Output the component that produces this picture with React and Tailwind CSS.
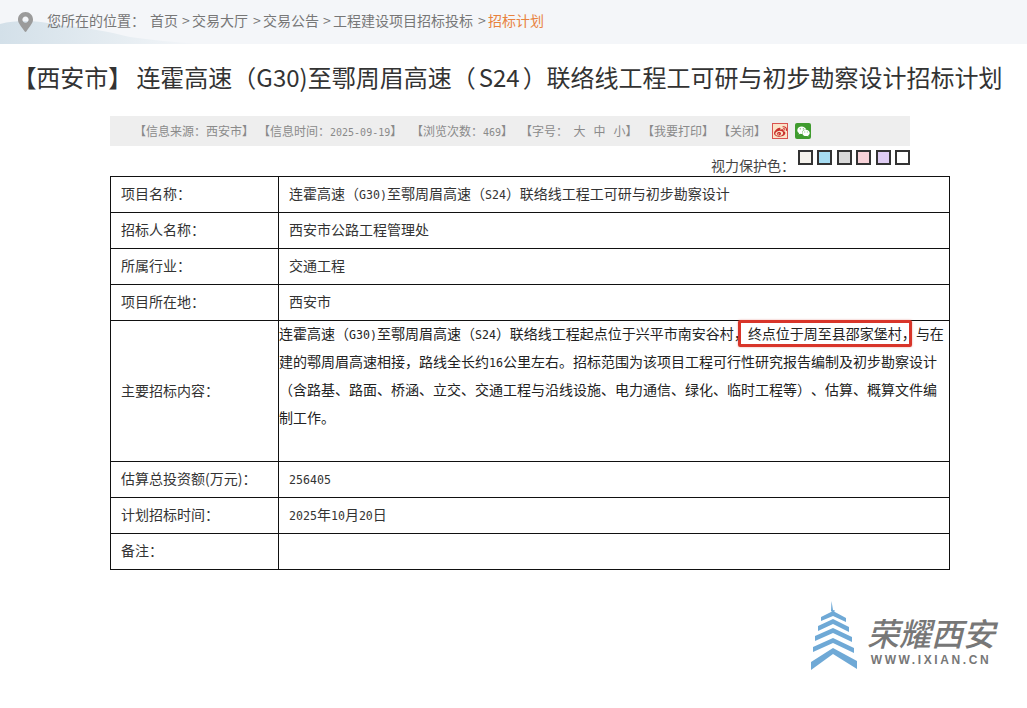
import React from "react";
import { FaMapMarkerAlt, FaWeixin } from "react-icons/fa";
import { SiSinaweibo } from "react-icons/si";

const Num = ({ children }) => (
  <span className="font-['DejaVu_Sans_Mono',monospace] text-[11.6px] leading-none">{children}</span>
);
const Small = ({ children }) => (
  <span className="font-['DejaVu_Sans_Mono',monospace] text-[10px] leading-none">{children}</span>
);

const Row = ({ label, children }) => (
  <tr className="h-9">
    <td className="border border-[#111] pb-[3px] pl-[10px] text-[#333]">{label}</td>
    <td className="border border-[#111] pb-[3px] pl-[10px] text-[#333]">{children}</td>
  </tr>
);

const swatches = [
  "bg-[#f5f2ec]",
  "bg-[#a6dcf2]",
  "bg-[#d9d9d9]",
  "bg-[#f8d3d9]",
  "bg-[#dfcdf3]",
  "bg-white",
];

export default function App() {
  return (
    <div className="w-[1027px] h-[708px] overflow-hidden bg-white font-['Noto_Sans_CJK_SC','Microsoft_YaHei',sans-serif] text-[14px] text-[#333] [text-spacing-trim:space-all]">
      {/* breadcrumb */}
      <div className="relative flex h-[44px] items-center bg-[#f4f6f9] pl-[18px]">
        <svg className="absolute left-0 top-0 h-[44px] w-[200px]" viewBox="0 0 200 44" aria-hidden="true">
          <defs>
            <linearGradient id="hill" x1="0" y1="0" x2="1" y2="0">
              <stop offset="0" stopColor="#d3e0e9" />
              <stop offset="0.6" stopColor="#e6edf2" />
              <stop offset="1" stopColor="#f4f6f9" />
            </linearGradient>
          </defs>
          <path d="M0 24C20 19 38 21 58 25C85 27 110 32 130 37C150 40 175 42 200 44H0Z" fill="url(#hill)" />
        </svg>
        <FaMapMarkerAlt className="relative h-[20px] w-[15px] text-[#9b9b9b]" />
        <div className="relative ml-[14px] flex items-center whitespace-nowrap pb-[3px] text-[14px] text-[#777]">
          <span className="mr-[5px]">您所在的位置：</span>
          <span>首页</span>
          <span className="ml-[4px] w-[10px]">&gt;</span>
          <span>交易大厅</span>
          <span className="ml-[5px] w-[10px]">&gt;</span>
          <span>交易公告</span>
          <span className="ml-[4px] w-[10px]">&gt;</span>
          <span>工程建设项目招标投标</span>
          <span className="ml-[5px] w-[10px]">&gt;</span>
          <span className="text-[#e8833f]">招标计划</span>
        </div>
      </div>

      {/* title */}
      <h1 className="mt-[16px] whitespace-nowrap pr-[12px] text-center text-[24px] leading-[34px] font-normal text-[#333]">
        【西安市】<span className="ml-[4px]">连霍高速（G30)至鄠周眉高速（</span><span className="mx-[3px]">S24</span>）联络线工程工可研与初步勘察设计招标计划
      </h1>

      {/* info bar */}
      <div className="ml-[110px] mt-[22px] flex h-[30px] w-[800px] items-center whitespace-nowrap bg-[#eeeeee] pl-[24px] text-[12px] text-[#8a8a8a]">
        <span className="w-[124px]">【信息来源：西安市】</span>
        <span className="w-[153px]">【信息时间：<Small>2025-09-19</Small>】</span>
        <span className="w-[109px]">【浏览次数：<Small>469</Small>】</span>
        <span className="w-[122px]">【字号：&nbsp;&nbsp;大&nbsp;&nbsp;&nbsp;中&nbsp;&nbsp;&nbsp;小】</span>
        <span className="w-[76px]">【我要打印】</span>
        <span className="w-[54px]">【关闭】</span>
        <span className="flex h-[16px] w-[16px] items-center justify-center border border-[#d9534f] bg-[#fbe3c8]">
          <SiSinaweibo className="h-[13px] w-[13px] text-[#c9302c]" />
        </span>
        <span className="ml-[7px] flex h-[16px] w-[16px] items-center justify-center rounded-[2px] bg-[#3f9b2e]">
          <FaWeixin className="h-[13px] w-[13px] text-white" />
        </span>
      </div>

      {/* eye-care colours */}
      <div className="ml-[110px] flex h-[30px] w-[800px] items-center justify-end whitespace-nowrap">
        <span className="mr-[3px] pt-[9px] text-[14px] text-[#444]">视力保护色：</span>
        <div className="mb-[7px] flex gap-[4.4px]">
          {swatches.map((c) => (
            <span key={c} className={`h-[15px] w-[15px] border-2 border-[#333] ${c}`} />
          ))}
        </div>
      </div>

      {/* details table */}
      <table className="ml-[110px] w-[840px] table-fixed border-collapse text-[14px] leading-[20px]">
        <colgroup>
          <col className="w-[168px]" />
          <col />
        </colgroup>
        <tbody>
          <Row label="项目名称：">
            连霍高速（<Num>G30)</Num>至鄠周眉高速（<Num>S24</Num>）联络线工程工可研与初步勘察设计
          </Row>
          <Row label="招标人名称：">西安市公路工程管理处</Row>
          <Row label="所属行业：">交通工程</Row>
          <Row label="项目所在地：">西安市</Row>
          <tr className="h-[141px]">
            <td className="border border-[#111] pb-[3px] pl-[10px] text-[#333]">主要招标内容：</td>
            <td className="border border-[#111] pb-[27px] align-top text-[#222]">
              <div className="-mt-[2px] whitespace-nowrap text-[14px] leading-[28px]">
                连霍高速（<Num>G30)</Num>至鄠周眉高速（<Num>S24</Num>）联络线工程起点位于兴平市南安谷村，
                <span className="relative">
                  终点位于周至县邵家堡村，
                  <span className="absolute -left-[10px] right-[4px] -top-[3px] -bottom-[4px] rounded-[2px] border-[3px] border-[#d8352a] shadow-[0_0_2px_#d8352a80]" />
                </span>
                与在
                <br />
                建的鄠周眉高速相接，路线全长约<Num>16</Num>公里左右。招标范围为该项目工程可行性研究报告编制及初步勘察设计
                <br />
                （含路基、路面、桥涵、立交、交通工程与沿线设施、电力通信、绿化、临时工程等）、估算、概算文件编
                <br />
                制工作。
              </div>
            </td>
          </tr>
          <Row label="估算总投资额(万元)："><Num>256405</Num></Row>
          <Row label="计划招标时间："><Num>2025</Num>年<Num>10</Num>月<Num>20</Num>日</Row>
          <Row label="备注："></Row>
        </tbody>
      </table>

      {/* logo */}
      <div className="mt-[31px] flex justify-end pr-[32px]">
        <svg className="h-[70px] w-[48px]" viewBox="0 0 48 70" aria-hidden="true">
          <path d="M21.5 0L23 9L25 9.5L23.5 12L21 10Z" fill="#6fa9d6" />
          <g fill="#6fa9d6">
            <path d="M23 10L36 17V21L23 15L11 20V16Z" />
            <path d="M23 18L39 26V31L23 23L8 30V25Z" />
            <path d="M23 27L42 36V41L23 32L5 40V35Z" />
            <path d="M23 37L44 47V52L23 42L3 51V46Z" />
            <path d="M23 47L47 60V68L23 53L1 69V61Z" />
          </g>
        </svg>
        <div className="ml-[9px] flex flex-col items-center pt-[12px]">
          <span className="text-[32px] leading-[38px] font-medium text-[#777] italic">荣耀西安</span>
          <span className="mt-[2px] font-['Liberation_Sans',sans-serif] text-[12px] leading-[14px] font-bold tracking-[2.6px] text-[#777]">
            WWW.IXIAN.CN
          </span>
        </div>
      </div>
    </div>
  );
}
